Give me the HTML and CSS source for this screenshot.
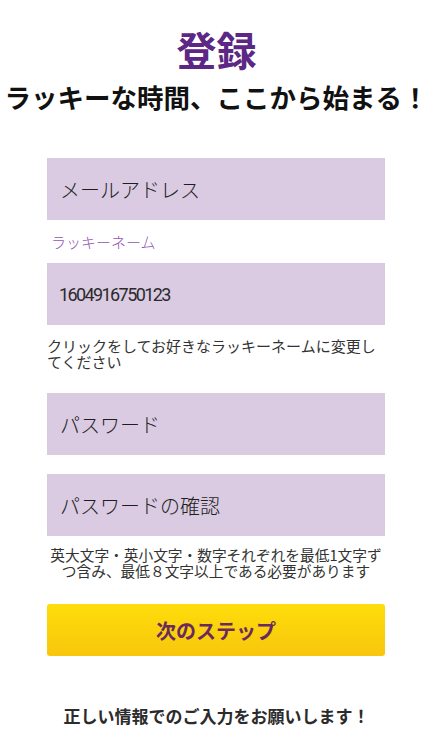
FILE: index.html
```html
<!DOCTYPE html>
<html lang="ja">
<head>
<meta charset="utf-8">
<title>登録</title>
<link rel="stylesheet" href="styles.css">
</head>
<body>
<main class="page">
  <h1 class="title">登録</h1>
  <p class="subtitle">ラッキーな時間、ここから始まる！</p>
  <form class="form">
    <input class="field field-first" type="email" placeholder="メールアドレス">
    <label class="lucky-label">ラッキーネーム</label>
    <input class="field field-value" type="text" value="1604916750123">
    <p class="hint">クリックをしてお好きなラッキーネームに変更してください</p>
    <input class="field field-pass" type="password" placeholder="パスワード">
    <input class="field field-confirm" type="password" placeholder="パスワードの確認">
    <p class="hint hint-center">英大文字・英小文字・数字それぞれを最低1文字ずつ含み、最低８文字以上である必要があります</p>
    <button class="next" type="button">次のステップ</button>
  </form>
  <p class="footer">正しい情報でのご入力をお願いします！</p>
</main>
</body>
</html>
```

FILE: styles.css
```css
html, body {
  margin: 0;
  padding: 0;
  background: #ffffff;
}

body {
  font-family: "Noto Sans CJK JP", "Noto Sans", sans-serif;
  color: #222222;
}

.page {
  display: flex;
  flex-direction: column;
  align-items: center;
  padding-top: 25px;
}

.title {
  margin: 0;
  font-size: 40px;
  line-height: 48px;
  font-weight: 700;
  color: #5c2785;
  text-align: center;
}

.subtitle {
  margin: 8px 0 0;
  font-size: 26.5px;
  line-height: 32px;
  font-weight: 700;
  color: #111111;
  text-align: center;
  white-space: nowrap;
}

.form {
  width: 338px;
  margin: 45px 0 0 -1px;
  display: flex;
  flex-direction: column;
}

.field {
  box-sizing: border-box;
  height: 62px;
  width: 100%;
  border: none;
  outline: none;
  background: #dacbe2;
  padding: 0 13px;
  margin: 0;
  font-family: "Noto Sans CJK JP", sans-serif;
  font-weight: 300;
  font-size: 20px;
  color: #222222;
}

.field::placeholder {
  color: #1e1e1e;
  opacity: 1;
}

.field-value {
  font-family: "Roboto", "Noto Sans CJK JP", sans-serif;
  font-weight: 400;
  font-size: 18px;
  letter-spacing: -1.6px;
  color: #2a2a2a;
  padding-left: 12px;
}

.lucky-label {
  margin: 12px 0 11px 4px;
  font-size: 15px;
  line-height: 20px;
  font-weight: 300;
  color: #9352b6;
}

.hint {
  margin: 13px 0 23px;
  font-size: 15px;
  line-height: 16px;
  font-weight: 400;
  color: #333333;
}

.field-confirm {
  margin-top: 19px;
}

.hint-center {
  margin: 11px 0 25px;
  text-align: center;
  font-size: 14.7px;
}

.next {
  height: 52px;
  width: 100%;
  border: none;
  border-radius: 3px;
  background: linear-gradient(to bottom, #fedd0b, #f8c60d);
  font-family: "Noto Sans CJK JP", sans-serif;
  font-size: 20px;
  font-weight: 700;
  color: #6a2a5e;
  cursor: pointer;
}

.footer {
  margin: 48px 0 0;
  font-size: 17px;
  line-height: 24px;
  font-weight: 700;
  color: #2b2b2b;
  text-align: center;
}
```
